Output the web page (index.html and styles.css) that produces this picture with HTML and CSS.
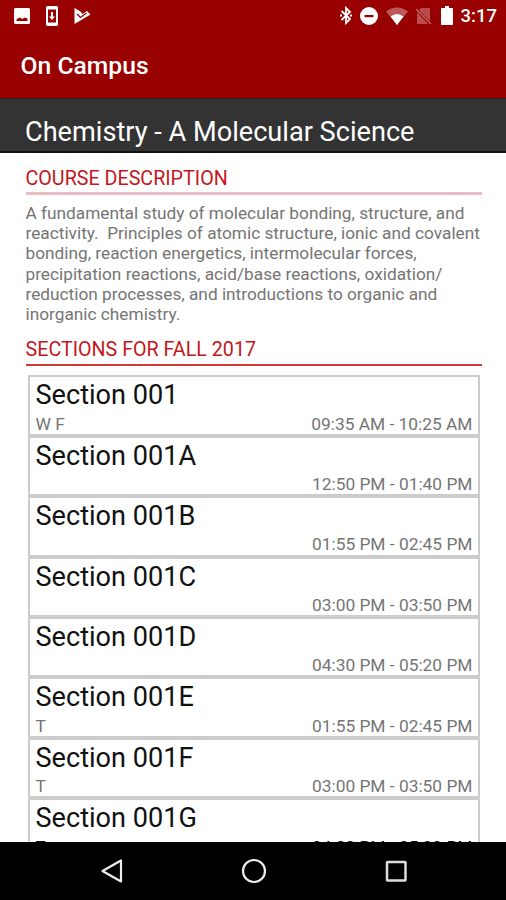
FILE: index.html
```
<!DOCTYPE html>
<html lang="en">

<head>
	<meta charset="UTF-8">
	<meta name="viewport" content="width=device-width, initial-scale=1.0">
	<title>On Campus</title>
	<link rel="stylesheet" href="styles.css">
</head>

<body>
	<header>
		<div class="status-bar">
			<div class="notifications">
				<svg width="18" height="18" viewBox="0 0 18 18">
					<path fill="#fff" fill-rule="evenodd" d="M2 1h14l1 1v14l-1 1H2l-1-1V2zM3.500 14h11v-2.500l-3-1-2 1.500-3-1.500-3 2z" />
				</svg>
				<svg width="14" height="20" viewBox="0 0 14 20">
					<path fill="#fff" fill-rule="evenodd" d="M2 0h10l1 1v18l-1 1H2l-1-1V1zM3 3.500v13h8v-13zM6 6h2v4.500h2L7 14l-3-3.500h2z" />
				</svg>
				<svg class="play" width="18" height="18" viewBox="0 0 18 18">
					<path fill="#fff" d="M1.500 1l6 3.500 2 2.500L14 4l3.500 3.500L1.500 17z" />
					<path fill="none" stroke="#990000" stroke-width="1.300" d="M4 7l3.500 3.500L13.500 6" />
				</svg>
			</div>
			<div class="system">
				<svg class="bluetooth" width="12" height="19" viewBox="0 0 12 19">
					<path fill="none" stroke="#fff" stroke-width="1.800" d="M1.500 5l8.500 8-4 4V2l4 4-8.500 8" />
					<path fill="#fff" d="M0 8.600h2v2H0zM10 8.600h2v2h-2z" />
				</svg>
				<svg class="dnd" width="18" height="18" viewBox="0 0 18 18">
					<circle cx="9" cy="9" r="9" fill="#fff" />
					<path fill="#990000" d="M4.500 8h9v2.200h-9z" />
				</svg>
				<svg class="wifi" width="22" height="18" viewBox="0 0 22 18">
					<path fill="#fff" fill-opacity=".35" d="M0 4.500Q11-3.500 22 4.500L11 18z" />
					<path fill="#fff" d="M4.500 9.500Q11 4.500 17.500 9.500L11 18z" />
				</svg>
				<svg class="signal" width="17" height="18" viewBox="0 0 17 18">
					<path fill="#fff" fill-opacity=".3" d="M6 1h9v13L4 3zM2 5l11 12H2z" />
					<path fill="none" stroke="#fff" stroke-opacity=".4" stroke-width="1.400" d="M1 2l15 15" />
				</svg>
				<svg class="battery" width="12" height="19" viewBox="0 0 12 19">
					<path fill="#fff" d="M4 0h4v2h3.500l.5.500v16l-.5.500H.5l-.5-.5v-16L.5 2H4z" />
				</svg>
				<span class="clock">3:17</span>
			</div>
		</div>
		<h1>On Campus</h1>
	</header>

	<h2>Chemistry - A Molecular Science</h2>

	<main>
		<h3 class="description-title">COURSE DESCRIPTION</h3>
		<p>
			A fundamental study of molecular bonding, structure, and<br>
			reactivity.&nbsp; Principles of atomic structure, ionic and covalent<br>
			bonding, reaction energetics, intermolecular forces,<br>
			precipitation reactions, acid/base reactions, oxidation/<br>
			reduction processes, and introductions to organic and<br>
			inorganic chemistry.
		</p>
		<h3 class="sections-title">SECTIONS FOR FALL 2017</h3>
		<ul>
			<li>
				<h4>Section 001</h4>
				<div class="times"><span>W F</span><span>09:35 AM - 10:25 AM</span></div>
			</li>
			<li>
				<h4>Section 001A</h4>
				<div class="times"><span></span><span>12:50 PM - 01:40 PM</span></div>
			</li>
			<li>
				<h4>Section 001B</h4>
				<div class="times"><span></span><span>01:55 PM - 02:45 PM</span></div>
			</li>
			<li>
				<h4>Section 001C</h4>
				<div class="times"><span></span><span>03:00 PM - 03:50 PM</span></div>
			</li>
			<li>
				<h4>Section 001D</h4>
				<div class="times"><span></span><span>04:30 PM - 05:20 PM</span></div>
			</li>
			<li>
				<h4>Section 001E</h4>
				<div class="times"><span>T</span><span>01:55 PM - 02:45 PM</span></div>
			</li>
			<li>
				<h4>Section 001F</h4>
				<div class="times"><span>T</span><span>03:00 PM - 03:50 PM</span></div>
			</li>
			<li class="last">
				<h4>Section 001G</h4>
				<div class="times"><span>T</span><span>04:30 PM - 05:20 PM</span></div>
			</li>
		</ul>
	</main>

	<nav>
		<svg width="24" height="26" viewBox="0 0 24 26">
			<path fill="none" stroke="#eee" stroke-width="2.200" stroke-linejoin="round" d="M21 2.500v21L2.500 13z" />
		</svg>
		<svg width="26" height="26" viewBox="0 0 26 26">
			<circle cx="13" cy="13" r="11" fill="none" stroke="#eee" stroke-width="2.200" />
		</svg>
		<svg width="24" height="26" viewBox="0 0 24 26">
			<rect x="3" y="4" width="18.500" height="18.500" rx=".5" fill="none" stroke="#ddd" stroke-width="2.500" />
		</svg>
	</nav>
</body>

</html>
```
FILE: styles.css
```
body {
	font-family: Roboto, sans-serif;
	margin: 0;
	height: 900px;
	display: flex;
	flex-direction: column;
	overflow: hidden;
	background-color: #fff;
}

h1,
h2,
h3,
h4,
p,
ul {
	margin: 0;
	padding: 0;
	font-weight: 400;
	white-space: nowrap;
}

svg {
	display: block;
	flex: none;
}

header {
	height: 98px;
	flex: none;
	background-color: #990000;
	color: #fff;
}

.status-bar {
	height: 31px;
	display: flex;
	justify-content: space-between;
	padding: 0 9px 0 13px;
}

.notifications,
.system {
	display: flex;
	align-items: center;
}

.notifications {
	gap: 14px;
}

.dnd {
	margin-left: 8.500px;
}

.wifi {
	margin-left: 7.500px;
}

.signal {
	margin-left: 7px;
}

.battery {
	margin-left: 9px;
}

.clock {
	margin-left: 8px;
	font-size: 18.500px;
	font-weight: 500;
}

h1 {
	font-size: 24.700px;
	font-weight: 500;
	line-height: 30px;
	padding: 20px 0 0 20.500px;
}

h2 {
	box-sizing: border-box;
	height: 55px;
	flex: none;
	padding: 18px 0 0 25px;
	border-top: 1px solid #222;
	border-bottom: 2px solid #111;
	background-color: #333;
	color: #fff;
	font-size: 27.150px;
	line-height: 30px;
}

main {
	flex: 1;
	min-height: 0;
	overflow: hidden;
	padding: 0 24px 0 25.500px;
}

h3 {
	color: #c4161c;
	font-size: 19.700px;
	line-height: 24px;
}

.description-title {
	margin-top: 14px;
	padding-bottom: 1px;
	border-bottom: 3px solid #ebbcc2;
}

.sections-title {
	margin-top: 14px;
	padding-bottom: 2px;
	border-bottom: 2px solid #d23a3a;
}

p {
	margin-top: 8px;
	color: #757575;
	font-size: 17.250px;
	line-height: 20.200px;
}

ul {
	list-style: none;
	margin: 9px 2px 0 2.500px;
	border: 2px solid #ccc;
	border-bottom: 0;
}

li {
	box-sizing: border-box;
	height: 60.450px;
	padding: 2px 5.500px 0 5.500px;
	border-bottom: 4px solid #ccc;
}

h4 {
	color: #111;
	font-size: 27.100px;
	line-height: 32px;
}

.times {
	display: flex;
	justify-content: space-between;
	margin-top: 2.400px;
	color: #757575;
	font-size: 17.350px;
	line-height: 20px;
}

.last .times {
	color: #111;
}

nav {
	height: 58px;
	flex: none;
	display: flex;
	justify-content: center;
	align-items: center;
	gap: 117px;
	padding-left: 1px;
	background-color: #000;
}
```
